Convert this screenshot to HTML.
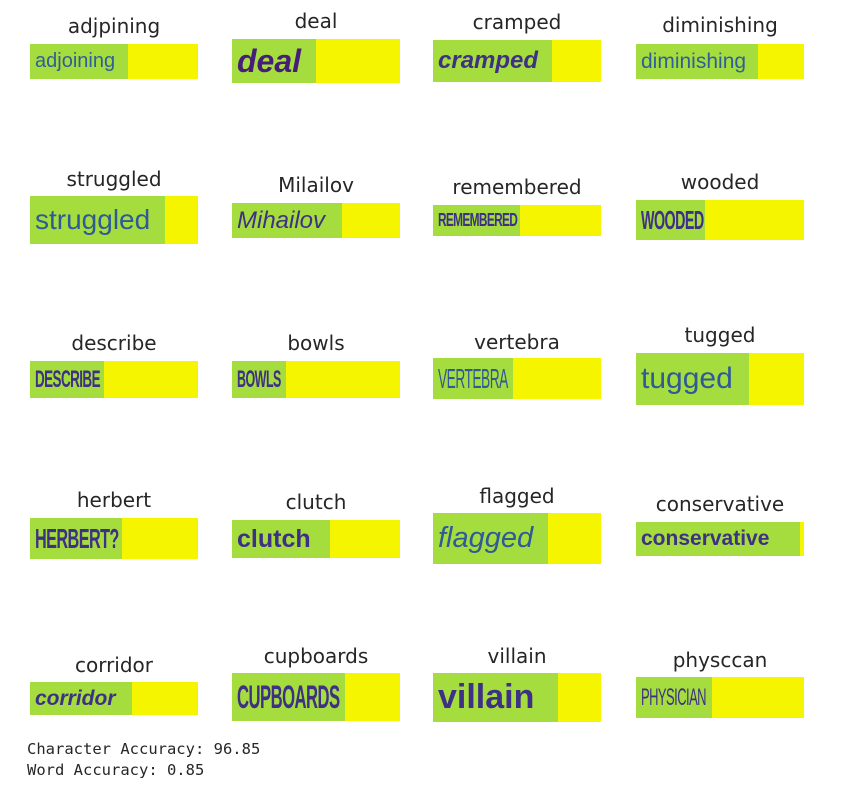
<!DOCTYPE html><html><head><style>
body{margin:0;width:843px;height:793px;background:#fff;position:relative;overflow:hidden;font-family:"DejaVu Sans","Liberation Sans",sans-serif}
.t{position:absolute;width:200px;text-align:center;font-size:20px;color:#262626;line-height:1}
.b{position:absolute;width:168px;background:#f5f500;overflow:hidden}
.g{position:absolute;left:0;top:0;bottom:0;background:#a6dd3e}
.w{position:absolute;left:5px;top:0;bottom:0;display:flex;align-items:center;color:#3d3085;white-space:nowrap;font-family:"Liberation Sans",sans-serif;transform-origin:left center}
.c{font-family:"Liberation Sans Narrow","Liberation Sans",sans-serif;font-weight:bold;letter-spacing:-1px}
.m{position:absolute;left:27px;font-family:"DejaVu Sans Mono","Liberation Mono",monospace;font-size:15.5px;color:#262626;line-height:1}
</style></head><body>

<div class="t" style="left:14px;top:16px">adjpining</div>
<div class="b" style="left:30px;top:44px;height:35px"><div class="g" style="width:98px"></div><div class="w" style="font-size:20px;color:#2e5f9a">adjoining</div></div>
<div class="t" style="left:216px;top:11px">deal</div>
<div class="b" style="left:232px;top:39px;height:44px"><div class="g" style="width:84px"></div><div class="w" style="font-size:32px;font-weight:bold;font-style:italic;color:#461d78">deal</div></div>
<div class="t" style="left:417px;top:12px">cramped</div>
<div class="b" style="left:433px;top:40px;height:42px"><div class="g" style="width:119px"></div><div class="w" style="font-size:24px;font-weight:bold;font-style:italic">cramped</div></div>
<div class="t" style="left:620px;top:15px">diminishing</div>
<div class="b" style="left:636px;top:44px;height:35px"><div class="g" style="width:122px"></div><div class="w" style="font-size:21px;color:#2e5f9a">diminishing</div></div>

<div class="t" style="left:14px;top:169px">struggled</div>
<div class="b" style="left:30px;top:196px;height:48px"><div class="g" style="width:135px"></div><div class="w" style="font-size:28px;color:#2e5a98">struggled</div></div>
<div class="t" style="left:216px;top:175px">Milailov</div>
<div class="b" style="left:232px;top:203px;height:35px"><div class="g" style="width:110px"></div><div class="w" style="font-size:24px;font-style:italic">Mihailov</div></div>
<div class="t" style="left:417px;top:177px">remembered</div>
<div class="b" style="left:433px;top:205px;height:31px"><div class="g" style="width:87px"></div><div class="w c" style="font-size:18px;transform:scaleX(.66)">REMEMBERED</div></div>
<div class="t" style="left:620px;top:172px">wooded</div>
<div class="b" style="left:636px;top:200px;height:40px"><div class="g" style="width:69px"></div><div class="w c" style="font-size:26px;transform:scaleX(.55)">WOODED</div></div>

<div class="t" style="left:14px;top:333px">describe</div>
<div class="b" style="left:30px;top:361px;height:37px"><div class="g" style="width:74px"></div><div class="w c" style="font-size:24px;transform:scaleX(.56)">DESCRIBE</div></div>
<div class="t" style="left:216px;top:333px">bowls</div>
<div class="b" style="left:232px;top:361px;height:37px"><div class="g" style="width:54px"></div><div class="w c" style="font-size:24px;transform:scaleX(.52)">BOWLS</div></div>
<div class="t" style="left:417px;top:332px">vertebra</div>
<div class="b" style="left:433px;top:358px;height:41px"><div class="g" style="width:80px"></div><div class="w c" style="font-size:28px;font-weight:normal;transform:scaleX(.49);color:#2e5a98">VERTEBRA</div></div>
<div class="t" style="left:620px;top:325px">tugged</div>
<div class="b" style="left:636px;top:353px;height:52px"><div class="g" style="width:113px"></div><div class="w" style="font-size:30px;color:#2e5a98">tugged</div></div>

<div class="t" style="left:14px;top:490px">herbert</div>
<div class="b" style="left:30px;top:518px;height:41px"><div class="g" style="width:92px"></div><div class="w c" style="font-size:28px;transform:scaleX(.58)">HERBERT?</div></div>
<div class="t" style="left:216px;top:492px">clutch</div>
<div class="b" style="left:232px;top:520px;height:38px"><div class="g" style="width:98px"></div><div class="w" style="font-size:25px;font-weight:bold">clutch</div></div>
<div class="t" style="left:417px;top:486px">flagged</div>
<div class="b" style="left:433px;top:513px;height:51px"><div class="g" style="width:115px"></div><div class="w" style="font-size:29px;font-style:italic;color:#2e5a98">flagged</div></div>
<div class="t" style="left:620px;top:494px">conservative</div>
<div class="b" style="left:636px;top:522px;height:34px"><div class="g" style="width:164px"></div><div class="w" style="font-size:21px;font-weight:bold;left:5px">conservative</div></div>

<div class="t" style="left:14px;top:655px">corridor</div>
<div class="b" style="left:30px;top:682px;height:33px"><div class="g" style="width:102px"></div><div class="w" style="font-size:21px;font-weight:bold;font-style:italic">corridor</div></div>
<div class="t" style="left:216px;top:646px">cupboards</div>
<div class="b" style="left:232px;top:673px;height:48px"><div class="g" style="width:113px"></div><div class="w c" style="font-size:32px;transform:scaleX(.52)">CUPBOARDS</div></div>
<div class="t" style="left:417px;top:646px">villain</div>
<div class="b" style="left:433px;top:673px;height:49px"><div class="g" style="width:125px"></div><div class="w" style="font-size:34px;font-weight:bold">villain</div></div>
<div class="t" style="left:620px;top:650px">physccan</div>
<div class="b" style="left:636px;top:677px;height:41px"><div class="g" style="width:76px"></div><div class="w c" style="font-size:24px;font-weight:normal;transform:scaleX(.54)">PHYSICIAN</div></div>

<div class="m" style="top:742px">Character Accuracy: 96.85</div>
<div class="m" style="top:763px">Word Accuracy: 0.85</div>
</body></html>
